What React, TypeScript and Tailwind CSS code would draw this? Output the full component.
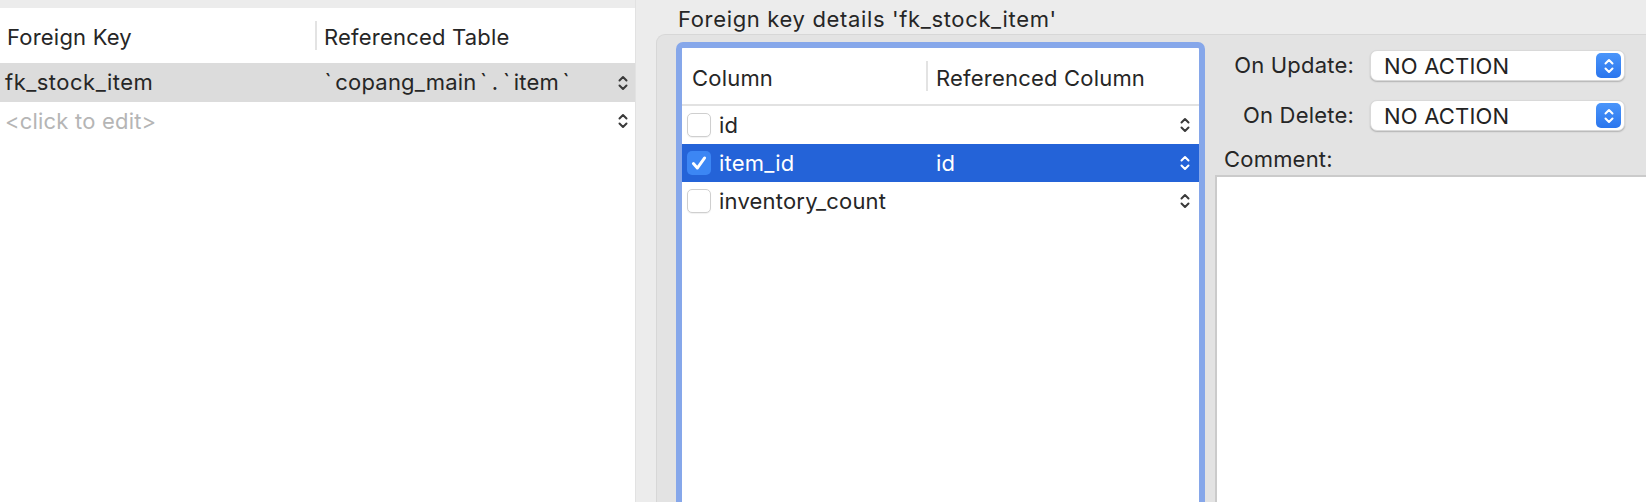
import React from "react";

const Stepper = ({ color = "#3a3a3a" }: { color?: string }) => (
  <svg width="12" height="18" viewBox="0 0 12 18" fill="none">
    <path d="M2.5 6.5 L6 3 L9.5 6.5" stroke={color} strokeWidth="2" strokeLinecap="round" strokeLinejoin="round" />
    <path d="M2.5 11.5 L6 15 L9.5 11.5" stroke={color} strokeWidth="2" strokeLinecap="round" strokeLinejoin="round" />
  </svg>
);

const Checkbox = ({ checked }: { checked?: boolean }) =>
  checked ? (
    <div className="w-[24px] h-[24px] rounded-[5px] bg-[#3c86f4] flex items-center justify-center shrink-0">
      <svg width="18" height="18" viewBox="0 0 16 16" fill="none">
        <path d="M3 8.5 L6.5 12.5 L13 3.5" stroke="white" strokeWidth="2.6" strokeLinecap="round" strokeLinejoin="round" />
      </svg>
    </div>
  ) : (
    <div className="w-[24px] h-[24px] rounded-[5px] bg-white border border-[#cfcfcf] shadow-[0_1px_1px_rgba(0,0,0,0.06)] shrink-0" />
  );

const Select = ({ value }: { value: string }) => (
  <div className="w-[255px] h-[31px] rounded-[7px] bg-white border border-[#d9d9d9] shadow-[0_1px_1.5px_rgba(0,0,0,0.22)] flex items-center pl-[13px] pr-[3px]">
    <span className="flex-1 text-[22px] text-[#232323] leading-none tracking-[0.2px]">{value}</span>
    <div className="w-[25px] h-[25px] rounded-[5px] bg-gradient-to-b from-[#4a95fa] to-[#2b76ee] flex items-center justify-center">
      <Stepper color="#ffffff" />
    </div>
  </div>
);

const Tick = () => <span className="px-[3.5px]">`</span>;

export default function App() {
  return (
    <div
      className="w-[1646px] h-[502px] bg-[#ececec] flex overflow-hidden text-[#262626] tracking-[0.2px]"
      style={{ fontFamily: "Inter, 'Noto Sans', sans-serif" }}
    >
      {/* Left panel */}
      <div className="w-[636px] pt-[8px] flex flex-col shrink-0 border-r border-[#e2e2e2]">
        <div className="flex-1 bg-white flex flex-col">
          <div className="h-[55px] flex items-center text-[22px] pt-[3px]">
            <div className="w-[315px] pl-[7px]">Foreign Key</div>
            <div className="w-[2px] h-[29px] bg-[#e3e3e3] -mt-[3px]" />
            <div className="pl-[7px]">Referenced Table</div>
          </div>
          <div className="h-[39px] bg-[#dcdcdc] flex items-center text-[22px]">
            <div className="w-[317px] pl-[5px] tracking-[0.5px]">fk_stock_item</div>
            <div className="flex-1 pl-[4px] whitespace-nowrap">
              <Tick />copang_main<Tick /><span className="px-[1px]">.</span><Tick />item<Tick />
            </div>
            <div className="pr-[6px] flex items-center">
              <Stepper />
            </div>
          </div>
          <div className="h-[38px] flex items-center text-[22px]">
            <div className="flex-1 pl-[5px] text-[#b5b5b5]">&lt;click to edit&gt;</div>
            <div className="pr-[6px] flex items-center">
              <Stepper />
            </div>
          </div>
        </div>
      </div>

      {/* Right area */}
      <div className="flex-1 flex flex-col">
        <div className="h-[34px] flex items-center pl-[42px] text-[22px] pt-[5px] tracking-[0.65px]">
          Foreign key details 'fk_stock_item'
        </div>
        <div className="flex-1 ml-[20px] bg-[#e3e3e3] border-t border-l border-[#d7d7d7] rounded-tl-[9px] flex pt-[7px] pl-[19px]">
          {/* Columns table with focus ring */}
          <div className="w-[529px] border-[6px] border-b-0 border-[#86a7ea] rounded-t-[7px] bg-white flex flex-col">
            <div className="h-[58px] border-b-2 border-[#e2e2e2] flex items-center text-[22px] pt-[4px]">
              <div className="w-[244px] pl-[10px]">Column</div>
              <div className="w-[2px] h-[30px] bg-[#e3e3e3] -mt-[4px]" />
              <div className="pl-[8px]">Referenced Column</div>
            </div>
            <div className="h-[38px] flex items-center text-[22px]">
              <div className="w-[246px] pl-[5px] flex items-center gap-[8px]">
                <Checkbox />
                <span>id</span>
              </div>
              <div className="flex-1 pl-[8px]"></div>
              <div className="pr-[8px] flex items-center">
                <Stepper />
              </div>
            </div>
            <div className="h-[38px] flex items-center text-[22px] bg-[#2463d8] text-white">
              <div className="w-[246px] pl-[5px] flex items-center gap-[8px]">
                <Checkbox checked />
                <span>item_id</span>
              </div>
              <div className="flex-1 pl-[8px]">id</div>
              <div className="pr-[8px] flex items-center">
                <Stepper color="#ffffff" />
              </div>
            </div>
            <div className="h-[38px] flex items-center text-[22px]">
              <div className="w-[246px] pl-[5px] flex items-center gap-[8px]">
                <Checkbox />
                <span>inventory_count</span>
              </div>
              <div className="flex-1 pl-[8px]"></div>
              <div className="pr-[8px] flex items-center">
                <Stepper />
              </div>
            </div>
            <div className="flex-1" />
          </div>

          {/* Form */}
          <div className="flex-1 flex flex-col pl-[10px]">
            <div className="flex items-center h-[31px] mt-[8px]">
              <div className="w-[139px] text-right text-[22px]">On Update:</div>
              <div className="ml-[16px]">
                <Select value="NO ACTION" />
              </div>
            </div>
            <div className="flex items-center h-[31px] mt-[19px]">
              <div className="w-[139px] text-right text-[22px]">On Delete:</div>
              <div className="ml-[16px]">
                <Select value="NO ACTION" />
              </div>
            </div>
            <div className="h-[44px] flex items-center pl-[9px] text-[22px] pt-[12px]">Comment:</div>
            <div className="flex-1 bg-white border-t-2 border-l-2 border-[#cbcbcb]" />
          </div>
        </div>
      </div>
    </div>
  );
}
